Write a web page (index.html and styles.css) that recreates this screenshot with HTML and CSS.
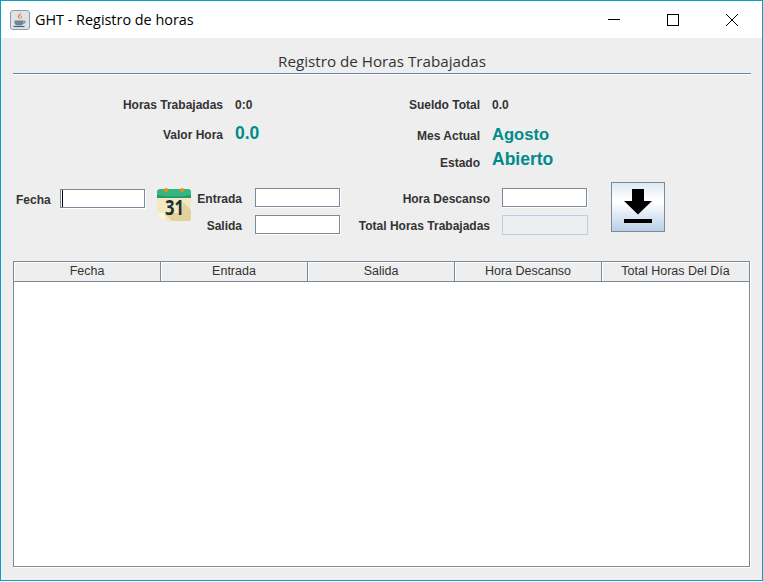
FILE: index.html
```html
<!DOCTYPE html>
<html lang="es">
<head>
<meta charset="utf-8">
<title>GHT - Registro de horas</title>
<link rel="stylesheet" href="styles.css">
</head>
<body>
<div class="window">
  <header class="titlebar">
    <div class="app-icon">
      <svg width="20" height="20" viewBox="0 0 20 20">
        <rect x="0.5" y="0.5" width="19" height="19" rx="2.5" fill="#dfe3e8" stroke="#8d99a6"/>
        <path d="M10.5 2.5c1.6 2-2.2 3 -1 5.5 .3.8 1 1.3 1.2 1.6-2.2-1-3.5-2.6-2.5-4.3C9.300 4.500 10.500 3.800 10.500 2.500z" fill="#e2762a"/>
        <path d="M12 5c-.6 1.200-1.800 1.500-1.500 3 .1.500.4.900.6 1.300.3-.9 1.500-2.200.9-4.300z" fill="#e99a4e"/>
        <path d="M4.500 10.500h9v2.500c0 1.500-1.500 2.500-4.500 2.500s-4.500-1-4.500-2.500z" fill="#6f8396"/>
        <path d="M13.500 11.200h1.500v1.800h-1.800" fill="none" stroke="#6f8396"/>
        <path d="M3.500 16.500h11" stroke="#44607a" stroke-width="1.200"/>
      </svg>
    </div>
    <span class="app-title">GHT - Registro de horas</span>
    <div class="win-controls">
      <svg class="win-btn" width="59" height="38" viewBox="0 0 59 38"><path d="M24 18.500h12" stroke="#000"/></svg>
      <svg class="win-btn" width="59" height="38" viewBox="0 0 59 38"><rect x="24.500" y="13.500" width="11" height="11" fill="none" stroke="#000"/></svg>
      <svg class="win-btn" width="59" height="38" viewBox="0 0 59 38"><path d="M24 13l12 12M36 13l-12 12" stroke="#000" fill="none"/></svg>
    </div>
  </header>

  <main class="content">
    <h1 class="heading">Registro de Horas Trabajadas</h1>
    <div class="rule"></div>

    <section class="summary">
      <div class="summary-col summary-left">
        <div class="pair pair-a"><span class="label">Horas Trabajadas</span><span class="value">0:0</span></div>
        <div class="pair pair-b"><span class="label">Valor Hora</span><span class="value-big value-wide">0.0</span></div>
      </div>
      <div class="summary-col summary-right">
        <div class="pair pair-a"><span class="label">Sueldo Total</span><span class="value">0.0</span></div>
        <div class="pair pair-c"><span class="label">Mes Actual</span><span class="value-big">Agosto</span></div>
        <div class="pair pair-d"><span class="label">Estado</span><span class="value-big value-wide">Abierto</span></div>
      </div>
    </section>

    <section class="entry">
      <div class="fecha-group">
        <span class="label">Fecha</span>
        <div class="field"><span class="caret"></span></div>
      </div>
      <svg class="calendar" width="34" height="34" viewBox="0 0 34 34">
        <path d="M0 9h34v21a3 3 0 0 1-3 3H8l-8-8z" fill="#f3e8bf"/>
        <path d="M26 14l8 8v8a3 3 0 0 1-3 3H15l-7-7 2-1h14z" fill="#e2d29b"/>
        <path d="M0 25h8v8z" fill="#fbf6e0"/>
        <path d="M0 10V4a3 3 0 0 1 3-3h28a3 3 0 0 1 3 3v6z" fill="#35b67e"/>
        <path d="M0 10V7q17 3 34 0v3z" fill="#1f9a68"/>
        <rect x="7" y="0" width="4" height="4" rx="2" fill="#f08a18"/>
        <rect x="23" y="0" width="4" height="4" rx="2" fill="#f08a18"/>
        <text x="17.500" y="27" class="calendar-text" text-anchor="middle" textLength="19" lengthAdjust="spacingAndGlyphs">31</text>
      </svg>
      <div class="entry-col entry-times">
        <div class="row"><span class="label">Entrada</span><div class="field"></div></div>
        <div class="row"><span class="label">Salida</span><div class="field"></div></div>
      </div>
      <div class="entry-col entry-totals">
        <div class="row"><span class="label">Hora Descanso</span><div class="field"></div></div>
        <div class="row"><span class="label">Total Horas Trabajadas</span><div class="field field-off"></div></div>
      </div>
      <button class="save" type="button" aria-label="Guardar">
        <svg width="28" height="34" viewBox="0 0 28 34"><path d="M8 0h12v12h8L14 25.500 0 12h8z" fill="#000"/><rect x="0" y="30" width="28" height="4" fill="#000"/></svg>
      </button>
    </section>

    <section class="table">
      <div class="thead">
        <div class="th">Fecha</div>
        <div class="th">Entrada</div>
        <div class="th">Salida</div>
        <div class="th">Hora Descanso</div>
        <div class="th">Total Horas Del Día</div>
      </div>
      <div class="tbody"></div>
    </section>
  </main>
</div>
</body>
</html>
```
FILE: styles.css
```css
* { box-sizing: border-box; }
html, body { margin: 0; padding: 0; }
body { width: 763px; height: 582px; overflow: hidden; font-family: "Liberation Sans", Arial, sans-serif; background: #f4f4f4; }

.window { width: 763px; height: 581px; border: 1px solid #0e9fc0; display: flex; flex-direction: column; background: #eeeeee; }

.titlebar { height: 37px; flex: none; background: #fff; display: flex; align-items: center; padding-left: 9px; }
.app-icon { width: 20px; height: 20px; margin-right: 5px; line-height: 0; }
.app-title { font-family: "Open Sans", sans-serif; font-size: 14.4px; color: #000; }
.win-controls { margin-left: auto; display: flex; margin-right: 1px; }
.win-btn { width: 59px; height: 38px; display: block; }

.content { flex: 1; padding: 0 11px 0 12px; display: flex; flex-direction: column; }
.heading { margin: 12px 0 0; height: 23px; line-height: 22px; font-family: "Open Sans", sans-serif; font-weight: 400; font-size: 15.2px; color: #333; text-align: center; width: 738px; }
.rule { height: 2px; width: 738px; border-top: 1px solid #6b82b4; border-bottom: 1px solid #fff; }

.label { font-weight: 700; font-size: 12px; color: #333; white-space: nowrap; text-align: right; }
.value { font-weight: 700; font-size: 12px; color: #333; }
.value-big { font-weight: 700; font-size: 16.6px; color: #008b8b; }
.value-wide { font-size: 17.500px; }

.summary { display: flex; height: 107px; padding-top: 20px; }
.summary-col { display: flex; flex-direction: column; }
.summary-left { width: 257px; }
.summary-right { width: 300px; }
.pair { display: grid; column-gap: 12px; align-items: center; }
.summary-left .pair { grid-template-columns: 210px 1fr; }
.summary-right .pair { grid-template-columns: 210px 1fr; }
.pair-a { height: 20px; }
.pair-b { height: 20px; margin-top: 8px; }
.pair-b .label { padding-top: 2px; }
.pair-c { height: 20px; margin-top: 10px; }
.pair-c .label { padding-top: 2px; }
.pair-d { height: 20px; margin-top: 4px; }
.pair-d .label { padding-top: 6px; }

.entry { display: flex; height: 79px; }
.fecha-group { display: flex; align-items: center; height: 19px; margin-top: 7px; padding-left: 3px; width: 132px; }
.fecha-group .label { width: 44px; text-align: left; padding-top: 2px; }
.field { width: 85px; height: 19px; background: #fff; border: 1px solid #7a8a99; box-shadow: 1px 1px 0 #fff; display: flex; padding-left: 1px; }
.field-off { width: 86px; height: 20px; background: #eeeeee; border-color: #b8cfe5; box-shadow: none; }
.caret { width: 1px; background: #000; height: 100%; }
.calendar { margin: 6px 0 0 12px; flex: none; }
.entry-col { display: flex; flex-direction: column; gap: 8px; padding-top: 6px; }
.row { display: grid; column-gap: 13px; align-items: center; height: 19px; }
.row .label { padding-top: 2px; }
.entry-times { margin-left: 5px; width: 145px; }
.entry-times .row { grid-template-columns: 46px 85px; }
.entry-totals { margin-left: 16px; width: 231px; }
.entry-totals .row { grid-template-columns: 133px 86px; column-gap: 12px; }
.save { margin: 0 0 0 23px; width: 54px; height: 50px; padding: 6px 0 0; border: 1px solid #7a8a99; background: linear-gradient(#dde8f3 0%, #fff 33%, #fff 40%, #b8cfe5 100%); display: flex; justify-content: center; align-items: flex-start; }

.table { width: 737px; height: 306px; display: flex; flex-direction: column; box-shadow: 1px 1px 0 #fff; }
.thead { display: grid; grid-template-columns: repeat(4, 147px) 1fr; height: 21px; border: 1px solid #7a8a99; background: #eeeeee; box-shadow: 0 1px 0 #fff; }
.th { font-size: 12.5px; line-height: 19px; color: #333; text-align: center; border-right: 1px solid #7a8a99; box-shadow: inset 1px 0 0 #fff, inset 0 1px 0 #fff; }
.th:last-child { border-right: 0; }
.tbody { flex: 1; background: #fff; border: 1px solid #7a8a99; border-top: 0; }

.calendar-text { font-family: "Open Sans", sans-serif; font-weight: 700; font-size: 21px; fill: #1d3038; }
```
